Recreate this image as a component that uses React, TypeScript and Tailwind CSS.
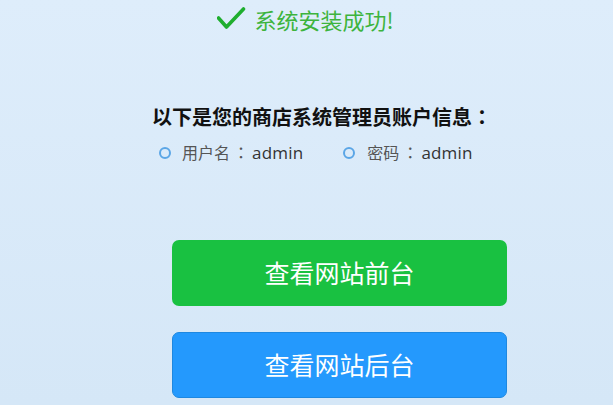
import React from "react";

const font = { fontFamily: '"Noto Sans CJK SC", "Noto Sans", sans-serif' };
const colonFont = { fontFamily: '"Noto Sans CJK TC", sans-serif' };
const latin = { fontFamily: '"Open Sans", "Noto Sans", sans-serif' };

function Dot() {
  return <span className="inline-block w-[12px] h-[12px] rounded-full border-2 border-[#5ba6e6] box-border" />;
}

export default function App() {
  return (
    <div
      className="w-[613px] h-[405px] overflow-hidden bg-gradient-to-b from-[#deedfb] to-[#d5e7f7] flex flex-col"
      style={font}
    >
      <div className="flex items-center justify-center pt-[4px] h-[34px] pr-[2px]">
        <svg width="30" height="26" viewBox="0 0 30 26" className="mr-[7px]">
          <path d="M1.5 12 L9.5 21 L26.5 3" fill="none" stroke="#1fae2f" strokeWidth="3.6" strokeLinecap="round" strokeLinejoin="round" />
        </svg>
        <span className="text-[22px] leading-[26px] text-[#3db43d]">系统安装成功!</span>
      </div>
      <div className="mt-[70px] ml-[152px] text-[20px] leading-[26px] font-bold text-[#111]">
        以下是您的商店系统管理员账户信息<span style={colonFont}>：</span>
      </div>
      <div className="mt-[11px] ml-[159px] flex items-center text-[16px] leading-[22px] text-[#555]">
        <Dot />
        <span className="ml-[11px]">
          用户名<span className="px-[3px]" style={colonFont}>：</span>
          <span className="text-[17px] text-[#333] tracking-[0.2px]" style={latin}>admin</span>
        </span>
        <span className="ml-[40px] flex items-center"><Dot /></span>
        <span className="ml-[12px]">
          密码<span className="px-[3px]" style={colonFont}>：</span>
          <span className="text-[17px] text-[#333] tracking-[0.2px]" style={latin}>admin</span>
        </span>
      </div>
      <div className="mt-[76px] ml-[172px] flex flex-col gap-[26px]">
        <button className="w-[335px] h-[66px] rounded-[7px] bg-[#19c141] text-white text-[25px] flex items-center justify-center">
          查看网站前台
        </button>
        <button className="w-[335px] h-[66px] rounded-[7px] bg-[#2499fd] border border-[#1e88e0] text-white text-[25px] flex items-center justify-center">
          查看网站后台
        </button>
      </div>
    </div>
  );
}
